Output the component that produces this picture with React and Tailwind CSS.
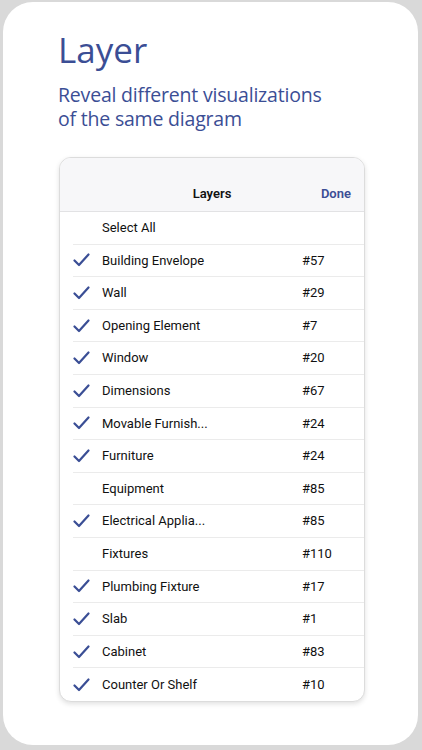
import React from "react";

const rows = [
  { name: "Building Envelope", n: "#57", c: true },
  { name: "Wall", n: "#29", c: true },
  { name: "Opening Element", n: "#7", c: true },
  { name: "Window", n: "#20", c: true },
  { name: "Dimensions", n: "#67", c: true },
  { name: "Movable Furnish...", n: "#24", c: true },
  { name: "Furniture", n: "#24", c: true },
  { name: "Equipment", n: "#85", c: false },
  { name: "Electrical Applia...", n: "#85", c: true },
  { name: "Fixtures", n: "#110", c: false },
  { name: "Plumbing Fixture", n: "#17", c: true },
  { name: "Slab", n: "#1", c: true },
  { name: "Cabinet", n: "#83", c: true },
  { name: "Counter Or Shelf", n: "#10", c: true },
];

function Check() {
  return (
    <svg width="17" height="14" viewBox="0 0 17 14" fill="none">
      <path d="M1.5 7.5 L6 12 L15.5 1.5" stroke="#3a4e95" strokeWidth="2.2" strokeLinecap="round" strokeLinejoin="round" />
    </svg>
  );
}

export default function App() {
  return (
    <div className="w-[422px] h-[750px] bg-[#d9d9d9] pt-[2px] pl-[3px] pr-[4px] pb-[5px] overflow-hidden">
      <div className="h-full bg-white rounded-[30px] pl-[55px] pt-[26px] flex flex-col">
        <div className="text-[#3b4e95] text-[35px] leading-[44px]" style={{ fontFamily: '"Open Sans", sans-serif' }}>Layer</div>
        <div className="text-[#3b4e95] text-[19.5px] leading-[24px] mt-[11px] tracking-[-0.2px]" style={{ fontFamily: '"Open Sans", sans-serif' }}>
          <div>Reveal different visualizations</div>
          <div>of the same diagram</div>
        </div>
        <div className="mt-[26px] ml-[1px] w-[306px] bg-white rounded-[12px] border border-[#dcdcdc] shadow-[0_2px_5px_rgba(0,0,0,0.12)] overflow-hidden" style={{ fontFamily: 'Roboto, sans-serif' }}>
          <div className="h-[54px] bg-[#f7f7f9] border-b border-[#e2e2e4] flex items-end pb-[8px] relative">
            <div className="w-full text-center text-[13px] font-semibold text-[#111]">Layers</div>
            <div className="absolute right-[13px] bottom-[8px] text-[13px] font-semibold text-[#3b4e95]">Done</div>
          </div>
          <div className="pl-[13px]">
            <div className="h-[32.6px] flex items-center border-b border-[#ebebeb]">
              <div className="w-[29px]" />
              <div className="text-[13px] text-[#111]">Select All</div>
            </div>
            {rows.map((r, i) => (
              <div key={i} className={"h-[32.6px] flex items-center " + (i < rows.length - 1 ? "border-b border-[#ebebeb]" : "")}>
                <div className="w-[29px] flex items-center">{r.c ? <Check /> : null}</div>
                <div className="w-[200px] text-[13px] text-[#111]">{r.name}</div>
                <div className="text-[13px] text-[#111]">{r.n}</div>
              </div>
            ))}
          </div>
        </div>
      </div>
    </div>
  );
}
